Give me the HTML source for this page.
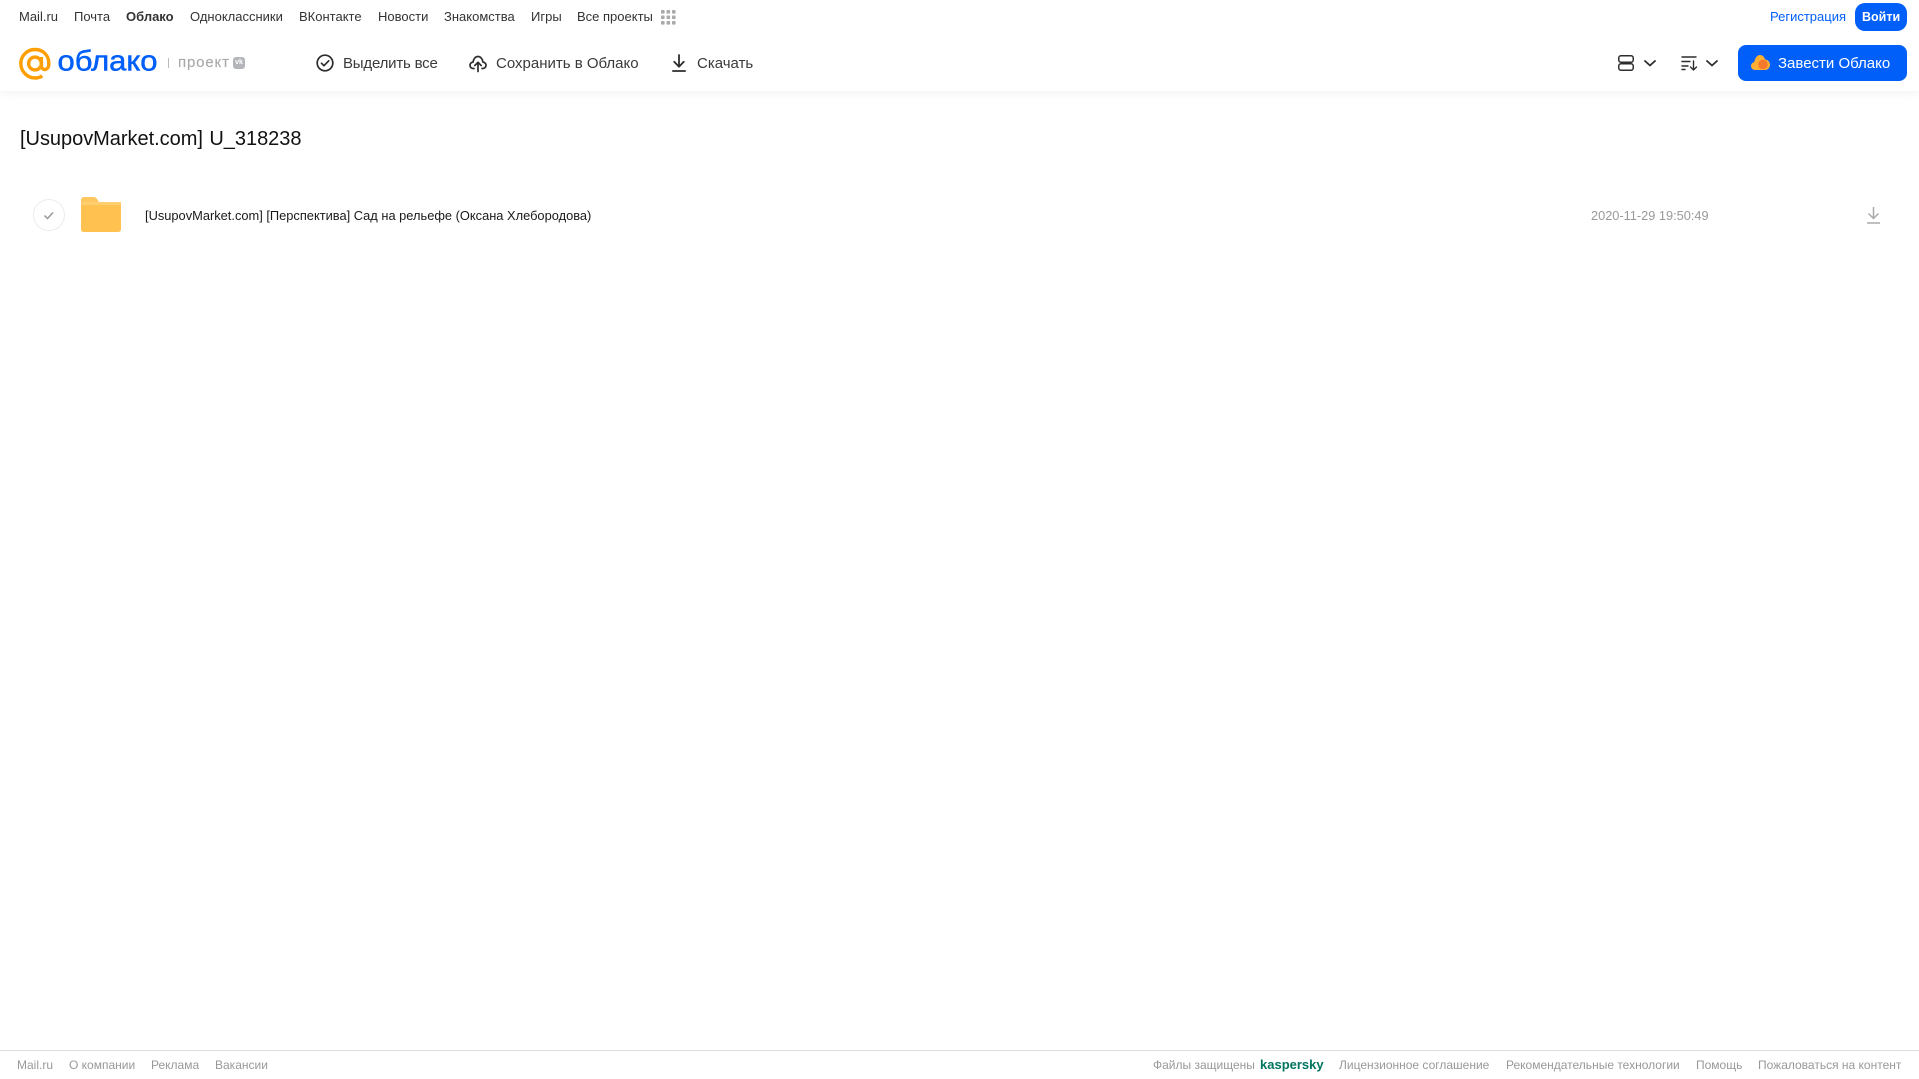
<!DOCTYPE html>
<html lang="ru"><head><meta charset="utf-8"><title>Облако</title>
<style>
html,body{margin:0;padding:0;width:1919px;height:1079px;overflow:hidden;background:#fff;font-family:"Liberation Sans",sans-serif}
.t{position:absolute;white-space:nowrap;line-height:20px;transform:translateY(-50%)}
.n{font-size:13px;color:#333;top:17px}
.b{font-size:15px;color:#3a3a3a;top:64px}
.f{font-size:12px;color:#999;top:1065px}
svg{position:absolute;overflow:visible}
#hd{position:absolute;left:0;top:0;width:1919px;height:91px;background:#fff;box-shadow:0 1px 10px rgba(0,0,0,.06)}
</style></head><body>
<div id="hd"></div>
<span class="t n" style="left:19px">Mail.ru</span>
<span class="t n" style="left:74px">Почта</span>
<span class="t n" style="left:126px;font-weight:bold">Облако</span>
<span class="t n" style="left:190px">Одноклассники</span>
<span class="t n" style="left:299px">ВКонтакте</span>
<span class="t n" style="left:378px">Новости</span>
<span class="t n" style="left:444px">Знакомства</span>
<span class="t n" style="left:531px">Игры</span>
<span class="t n" style="left:577px">Все проекты</span>
<svg style="left:661px;top:10px" width="15" height="15" fill="#aaa"><rect x="0" y="0" width="3.6" height="3.6" rx=".8"/><rect x="5.5" y="0" width="3.6" height="3.6" rx=".8"/><rect x="11" y="0" width="3.6" height="3.6" rx=".8"/><rect x="0" y="5.5" width="3.6" height="3.6" rx=".8"/><rect x="5.5" y="5.5" width="3.6" height="3.6" rx=".8"/><rect x="11" y="5.5" width="3.6" height="3.6" rx=".8"/><rect x="0" y="11" width="3.6" height="3.6" rx=".8"/><rect x="5.5" y="11" width="3.6" height="3.6" rx=".8"/><rect x="11" y="11" width="3.6" height="3.6" rx=".8"/></svg>
<span class="t n" style="left:1770px;color:#005ff9">Регистрация</span>
<div style="position:absolute;left:1855px;top:3px;width:52px;height:28px;border-radius:10px;background:#005ff9"></div>
<span class="t n" style="left:1862px;color:#fff;font-weight:bold;font-size:12.5px">Войти</span>

<svg style="left:19px;top:47px" width="33" height="33" viewBox="0 0 33 33" fill="none" stroke="#ff9e00" stroke-width="3.4"><circle cx="16" cy="16.5" r="6.4"/><path d="M22.4 10v8.500c0 5.500 7 5.500 7.400-1 .6-9-5.800-15-13.800-15C8 2.500 1.800 9 1.800 16.500S8 31 16 31c3 0 5.300-.8 7.300-2"/></svg>
<svg style="left:56px;top:40px" width="110" height="44"><text x="1.500" y="30.500" font-family="Liberation Sans" font-size="29" fill="#005ff9" stroke="#005ff9" stroke-width=".5" textLength="100" lengthAdjust="spacingAndGlyphs">облако</text></svg>
<div style="position:absolute;left:168px;top:58px;width:1px;height:10px;background:#bbb"></div>
<svg style="left:178px;top:52px" width="54" height="22"><text x="0" y="15" font-family="Liberation Sans" font-size="15" fill="#a8aaad" stroke="#a8aaad" stroke-width=".15" textLength="51">проект</text></svg>
<div style="position:absolute;left:233px;top:57px;width:12px;height:12px;border-radius:3px;background:#b3b5b8;color:#fff;font-size:7px;font-weight:bold;line-height:12px;text-align:center">vk</div>

<svg style="left:316px;top:54px" width="18" height="18" fill="none" stroke="#2c2d2e" stroke-width="1.700"><circle cx="9" cy="9" r="7.800"/><path d="M5.500 9.300l2.500 2.400 4.700-4.900" stroke-linecap="round" stroke-linejoin="round"/></svg>
<span class="t b" style="left:343px;letter-spacing:-.2px">Выделить все</span>
<svg style="left:469px;top:54px" width="18" height="18" viewBox="0 0 18 18" fill="none" stroke="#2c2d2e" stroke-width="1.700" stroke-linecap="round" stroke-linejoin="round"><path d="M5 14.500H4.200C2.300 14.500 1 13 1 11.300c0-1.800 1.300-3 3-3.200C4.500 4.700 6.500 2.500 9 2.500s4.500 2.200 5 5.600c1.700.2 3 1.400 3 3.200 0 1.700-1.300 3.200-3.200 3.200H13"/><path d="M9 17.500V8.500M5.800 11.500L9 8.300l3.200 3.200"/></svg>
<span class="t b" style="left:496px">Сохранить в Облако</span>
<svg style="left:672px;top:54px" width="14" height="18" fill="none" stroke="#2c2d2e" stroke-width="1.800" stroke-linecap="round" stroke-linejoin="round"><path d="M7 1v11.500M2.200 7.800L7 12.700l4.800-4.900M.9 17h12.200"/></svg>
<span class="t b" style="left:697px">Скачать</span>

<svg style="left:1618px;top:55px" width="16" height="16" fill="none" stroke="#2c2d2e" stroke-width="1.500"><rect x=".75" y=".75" width="14.500" height="6.500" rx="2.200"/><rect x=".75" y="8.750" width="14.500" height="6.500" rx="2.200"/></svg>
<svg style="left:1644px;top:60px" width="12" height="7" fill="none" stroke="#2c2d2e" stroke-width="1.800" stroke-linecap="round" stroke-linejoin="round"><path d="M1 1l5 4.500L11 1"/></svg>
<svg style="left:1681px;top:55px" width="17" height="16" fill="none" stroke="#2c2d2e" stroke-width="1.400" stroke-linecap="round" stroke-linejoin="round"><path d="M1 2h14M1 6.500h8M1 11h6M1 14.500h3M12.500 6v9M9.500 12l3 3 3-3"/></svg>
<svg style="left:1706px;top:60px" width="12" height="7" fill="none" stroke="#2c2d2e" stroke-width="1.800" stroke-linecap="round" stroke-linejoin="round"><path d="M1 1l5 4.500L11 1"/></svg>

<div style="position:absolute;left:1738px;top:45px;width:169px;height:36px;border-radius:8px;background:#005ff9"></div>
<svg style="left:1751px;top:54px" width="19" height="17" viewBox="0 0 19 17"><path d="M4 16C1.800 16 0 14.200 0 12c0-2 1.400-3.600 3.300-3.900C3.800 4.500 6 1 9 1c2.600 0 4.500 2 5 4.500 2.800.2 5 2.300 5 5.200 0 2.900-2.300 5.300-5.200 5.300z" fill="#ffb033"/><circle cx="12" cy="10.500" r="4.800" fill="#f5792a"/></svg>
<span class="t b" style="left:1778px;color:#fff">Завести Облако</span>

<span class="t" style="left:20px;top:139px;font-size:20px;color:#111;word-spacing:1px;letter-spacing:-.03px">[UsupovMarket.com] U_318238</span>

<svg style="left:33px;top:199px" width="32" height="32" fill="none"><circle cx="16" cy="16" r="15.500" stroke="#ececec"/><path d="M11.500 16.500l3 3 5.500-6" stroke="#999" stroke-width="1.500"/></svg>
<svg style="left:81px;top:197px" width="40" height="35" viewBox="0 0 40 35"><path d="M0 3a3 3 0 0 1 3-3h9c2 0 3 .8 4 2l2 3h19a3 3 0 0 1 3 3v24a3 3 0 0 1-3 3H3a3 3 0 0 1-3-3z" fill="#ffc75f"/><path d="M0 8h40v24a3 3 0 0 1-3 3H3a3 3 0 0 1-3-3z" fill="#ffc150"/><rect x="0" y="5" width="40" height="3" fill="#ffce6e"/></svg>
<span class="t" style="left:145px;top:216px;font-size:12.850px;color:#1a1a1a">[UsupovMarket.com] [Перспектива] Сад на рельефе (Оксана Хлебородова)</span>
<span class="t" style="left:1591px;top:216px;font-size:12.770px;color:#999">2020-11-29 19:50:49</span>
<svg style="left:1867px;top:207px" width="13" height="17" fill="none" stroke="#aaa" stroke-width="1.500"><path d="M6.500 0v11.500M1.500 6.500l5 5 5-5M0 16h13"/></svg>

<div style="position:absolute;left:0;top:1050px;width:1919px;height:1px;background:#ddd"></div>
<span class="t f" style="left:17px">Mail.ru</span>
<span class="t f" style="left:69px">О компании</span>
<span class="t f" style="left:151px">Реклама</span>
<span class="t f" style="left:215px">Вакансии</span>
<span class="t f" style="left:1153px">Файлы защищены</span>
<span class="t f" style="left:1260px;font-weight:bold;font-size:13px;color:#00745f">kaspersky</span>
<span class="t f" style="left:1339px">Лицензионное соглашение</span>
<span class="t f" style="left:1506px">Рекомендательные технологии</span>
<span class="t f" style="left:1696px">Помощь</span>
<span class="t f" style="left:1758px">Пожаловаться на контент</span>
</body></html>
